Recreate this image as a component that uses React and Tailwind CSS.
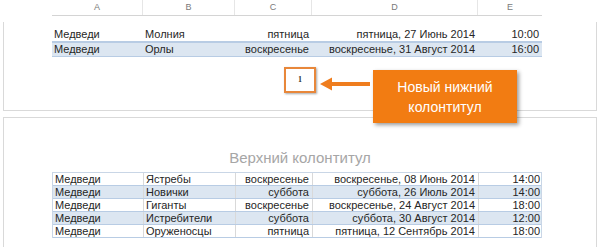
import React from 'react';

const cols = 'grid grid-cols-[91px_92px_77px_166px_64px]';

const topRows = [
  ['Медведи', 'Молния', 'пятница', 'пятница, 27 Июнь 2014', '10:00'],
  ['Медведи', 'Орлы', 'воскресенье', 'воскресенье, 31 Август 2014', '16:00'],
];

const bottomRows = [
  ['Медведи', 'Ястребы', 'воскресенье', 'воскресенье, 08 Июнь 2014', '14:00'],
  ['Медведи', 'Новички', 'суббота', 'суббота, 26 Июль 2014', '14:00'],
  ['Медведи', 'Гиганты', 'воскресенье', 'воскресенье, 24 Август 2014', '18:00'],
  ['Медведи', 'Истребители', 'суббота', 'суббота, 30 Август 2014', '12:00'],
  ['Медведи', 'Оруженосцы', 'пятница', 'пятница, 12 Сентябрь 2014', '18:00'],
];

function Row({ cells, blue, height, lines }) {
  return (
    <div
      className={`${cols} ${height} ${blue ? 'bg-[#dce6f1]' : 'bg-white'} border-b border-[#b8cce4] text-[11px] leading-none text-[#262626]`}
    >
      {cells.map((c, i) => (
        <div
          key={i}
          className={`flex items-center px-[2px] ${i < 2 ? 'justify-start' : 'justify-end pr-[3px]'} ${
            lines && i < 4 ? 'border-r border-[#d9d9d9]' : ''
          }`}
        >
          {c}
        </div>
      ))}
    </div>
  );
}

export default function App() {
  return (
    <div className="relative w-[600px] h-[247px] overflow-hidden bg-white font-['Liberation_Sans',sans-serif]">
      {/* column letters */}
      <div className="pl-[52px]">
        <div className={`${cols} w-[490px] h-[16px] border-b border-[#d4d4d4] text-[9px] text-[#7a7a7a]`}>
          {['A', 'B', 'C', 'D', 'E'].map((l, i) => (
            <div key={l} className={`flex items-center justify-center ${i < 4 ? 'border-r border-[#e6e6e6]' : ''}`}>
              {l}
            </div>
          ))}
        </div>
      </div>

      {/* first page */}
      <div className="mx-[3px] mt-[6px] h-[89px] border-x border-b border-[#d9d9d9]">
        <div className="ml-[48px] pt-[6px] w-[490px]">
          {topRows.map((r, i) => (
            <div key={i} className={i === 1 ? 'border-t border-[#b8cce4]' : ''}>
              <Row cells={r} blue={i === 1} height="h-[14px]" />
            </div>
          ))}
        </div>
        <div className="mx-auto mt-[10px] w-[32px] h-[26px] border-2 border-[#e8873a] shadow-[1px_1px_2px_rgba(0,0,0,0.35)] flex items-center justify-center bg-white">
          <span className="text-[8px] font-bold text-[#333] font-['Liberation_Serif',serif]">1</span>
        </div>
      </div>

      {/* second page */}
      <div className="mx-[3px] mt-[6px] h-[140px] border-x border-t border-[#d9d9d9]">
        <div className="pt-[29px] text-center text-[15px] leading-[22px] text-[#a6a6a6]">Верхний колонтитул</div>
        <div className="ml-[48px] mt-[3px] w-[490px] border-t border-l border-r border-[#c9d6e6]">
          {bottomRows.map((r, i) => (
            <Row key={i} cells={r} blue={i % 2 === 1} height="h-[13px]" lines />
          ))}
        </div>
      </div>

      {/* annotation */}
      <svg className="absolute left-[318px] top-[76px]" width="54" height="16" viewBox="0 0 54 16">
        <path d="M2 8 L14 1.5 L14 6 L52 6 L52 10 L14 10 L14 14.5 Z" fill="#ef7d1e" />
      </svg>
      <div className="absolute left-[373px] top-[70px] w-[144px] h-[53px] bg-[#f27c12] shadow-[2px_2px_4px_rgba(0,0,0,0.4)] flex flex-col items-center justify-center text-white text-[14px] leading-[20px]">
        <span>Новый нижний</span>
        <span>колонтитул</span>
      </div>
    </div>
  );
}
